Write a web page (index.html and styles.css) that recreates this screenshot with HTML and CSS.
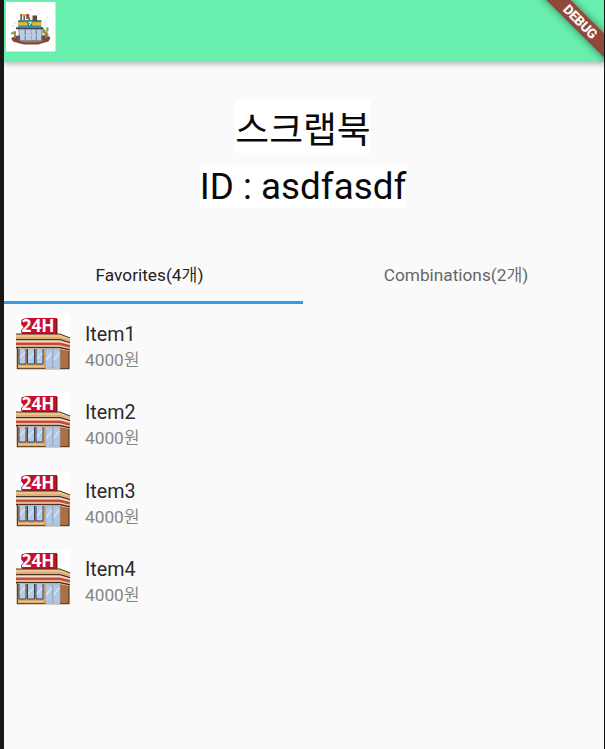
FILE: index.html
```
<!DOCTYPE html>
<html lang="ko">
<head>
<meta charset="utf-8">
<title>스크랩북</title>
<link rel="stylesheet" href="styles.css">
</head>
<body>
<main class="app">
  <header class="bar">
    <svg class="logo" viewBox="0 0 49 49">
      <rect width="49" height="49" fill="#fff"/>
      <path d="M5 36q4-3 9-3h24q5 0 6 3l-2 3-7 2-3 1H18l-4-1-7-2z" fill="#76483f"/>
      <path d="M12 38h26l-5 2H18z" fill="#a27469"/>
      <path d="M14 26h21v12H14z" fill="#b9cee9"/>
      <path d="M13 26v12M19 27v11M30 27v11M35.500 26v12" stroke="#68738d"/>
      <path d="M25 27v11" stroke="#8ea7ce"/>
      <path d="M14 33h21" stroke="#e2c98b"/>
      <path d="M10 25h27v2H10z" fill="#45424b"/>
      <path d="M12 18h23v6H12z" fill="#eeb91f"/>
      <path d="M12 18h23v2H12z" fill="#2787b8"/>
      <path d="M12 24h23" stroke="#348fc1" stroke-width="1.500"/>
      <path d="M21 18h5v6h-5z" fill="#258d83"/>
      <path d="M22 20h3l-2 3" fill="none" stroke="#e5fff6"/>
      <path d="M15 12v6M18 13v5M27 14h3v4h-3z" stroke="#514d39" stroke-width="1.500" fill="#514d39"/>
      <path d="M16 12h4v2h-4z" fill="#e6a526"/>
      <path d="M20 12h3v5h-3z" fill="#a84338"/>
      <path d="M23 15v3" stroke="#5f9547" stroke-width="2"/>
      <path d="M7 29h3v3H7zM5 30h2v2H5zM36 27h3v4h-3zM40 25h2v4h-2zM38 31h4v2h-4z" fill="#829f3e"/>
      <path d="M8 32h2v4H8zM39 29h2v7h-2z" fill="#a96d45"/>
      <path d="M6 24h2M8 21h2M38 20h2M40 15h2M31 12h2M24 8h2M10 15h2" stroke="#eee9f6" stroke-width="2"/>
    </svg>
    <div class="ribbon">DEBUG</div>
  </header>
  <section class="profile">
    <h1 class="title">스크랩북</h1>
    <div class="user">ID : asdfasdf</div>
  </section>
  <nav class="tabs">
    <div class="tab active">Favorites(4<span class="ko">개</span>)</div>
    <div class="tab">Combinations(2<span class="ko">개</span>)</div>
  </nav>
  <ul class="list">
    <li class="item">
      <svg class="thumb" viewBox="0 0 54 55">
        <g id="store">
          <rect width="54" height="55" fill="#fff"/>
          <path d="M6 4h4l1-1h30v16H6l-1-3 3-3-3-4z" fill="#c90d2c"/>
          <path d="M40 4h1.500v15H40z" fill="#7d1424"/>
          <text x="5.500" y="17.200" class="sign" textLength="33" lengthAdjust="spacingAndGlyphs">24H</text>
          <path d="M0 19h44l10 4v5H0z" fill="#dcae76"/>
          <path d="M0 19h44l10 4v2l-10-3H0z" fill="#ebc48c"/>
          <path d="M0 19h44l10 4" fill="none" stroke="#45301f"/>
          <path d="M1 33h43v21H1z" fill="#d79d62"/>
          <path d="M44 33l9 2v19h-9z" fill="#ad7042"/>
          <path d="M0 24h44l10 3v9l-10-2H0z" fill="#f1ddc8"/>
          <path d="M0 24.700h44l10 3" fill="none" stroke="#493023" stroke-width="1.300"/>
          <path d="M0 28.900h44l10 2.500" fill="none" stroke="#c64b32" stroke-width="2.600"/>
          <path d="M0 32.500h44l10 2.300" fill="none" stroke="#4d3021" stroke-width="1.500"/>
          <path d="M3 34h7v15H3zM11.500 34h7v15h-7zM20 34h7v15h-7z" fill="#b2cceb"/>
          <path d="M3 34v15h7V34M11.500 34v15h7V34M20 34v15h7V34" fill="none" stroke="#40414d"/>
          <path d="M29.500 34h7v19h-7zM37 34h7v19h-7z" fill="#adc9e9" stroke="#9ba5b5" stroke-width=".6"/>
          <path d="M4 43l5-6M12.500 44l5-6M21 44l5-6M30.500 45l5-7M38 45l5-7" stroke="#cfe1f7" stroke-width="1.700"/>
          <path d="M1.300 33v20.700H53V36" fill="none" stroke="#483024" stroke-width="1.100"/>
          <path d="M2 51.500h26" stroke="#f0c789" stroke-width="1.500"/>
          <path d="M29.500 53.500H44" stroke="#b9c2cc"/>
        </g>
      </svg>
      <div class="info"><div class="name">Item1</div><div class="price">4000<span class="ko">원</span></div></div>
    </li>
    <li class="item"><svg class="thumb" viewBox="0 0 54 55"><use href="#store"/></svg><div class="info"><div class="name">Item2</div><div class="price">4000<span class="ko">원</span></div></div></li>
    <li class="item"><svg class="thumb" viewBox="0 0 54 55"><use href="#store"/></svg><div class="info"><div class="name">Item3</div><div class="price">4000<span class="ko">원</span></div></div></li>
    <li class="item"><svg class="thumb" viewBox="0 0 54 55"><use href="#store"/></svg><div class="info"><div class="name">Item4</div><div class="price">4000<span class="ko">원</span></div></div></li>
  </ul>
</main>
</body>
</html>
```
FILE: styles.css
```
* { box-sizing: border-box; }
body { margin: 0; font-family: Roboto, "Noto Sans CJK KR", sans-serif; }
.app {
  height: 749px;
  background: #fafafa;
  border-left: 4px solid #1a1816;
  border-right: 1px solid #111;
  overflow: hidden;
}
.bar {
  position: relative;
  height: 61.500px;
  padding: 2px;
  background: #69f0ae;
  box-shadow: 0 2px 5px rgba(0, 0, 0, .28);
}
.logo { display: block; width: 49.500px; height: 49.500px; }
.ribbon {
  position: absolute;
  top: 13.500px;
  right: -38.500px;
  width: 124px;
  height: 16.500px;
  transform: rotate(45deg);
  background: #92473b;
  box-shadow: 0 0 8px rgba(0, 0, 0, .5);
  color: #fff;
  font-size: 13.500px;
  font-weight: 800;
  line-height: 17px;
  text-align: center;
  letter-spacing: -.3px;
  padding-right: 2px;
}
.profile {
  display: flex;
  flex-direction: column;
  align-items: center;
  height: 185.500px;
  padding: 37px 2px 0 0;
}
.title, .user { background: #fff; color: #090909; font-weight: 400; white-space: nowrap; }
.title {
  margin: 0 0 12px;
  height: 54px;
  font: 400 36.800px/56px "Noto Sans CJK KR", sans-serif;
}
.user { height: 43px; font-size: 36.800px; line-height: 43px; }
.tabs { display: flex; height: 57px; }
.tab {
  width: 301px;
  padding-left: 5px;
  color: #666;
  font-size: 17.250px;
  line-height: 56px;
  text-align: center;
}
.tab.active {
  width: 299px;
  padding: 0 8px 0 0;
  color: #212121;
  border-bottom: 3px solid #2d9bf0;
}
.ko { font-family: "Noto Sans CJK KR", sans-serif; font-weight: 350; line-height: 1; }
.list { margin: 0; padding: 0; list-style: none; }
.item {
  display: flex;
  align-items: flex-start;
  gap: 15px;
  height: 78.600px;
  padding: 10.500px 0 0 12px;
}
.thumb { width: 54px; height: 55px; }
.info { padding-top: 7px; }
.sign {
  font: 700 18px "Open Sans", sans-serif;
  fill: #fff;
  stroke: #c90d2c;
  stroke-width: 1.500px;
  paint-order: stroke;
}
.name { color: #2b2b2b; font-size: 19.700px; line-height: 26px; }
.price { color: #858585; font-size: 17.250px; line-height: 24px; }
```
